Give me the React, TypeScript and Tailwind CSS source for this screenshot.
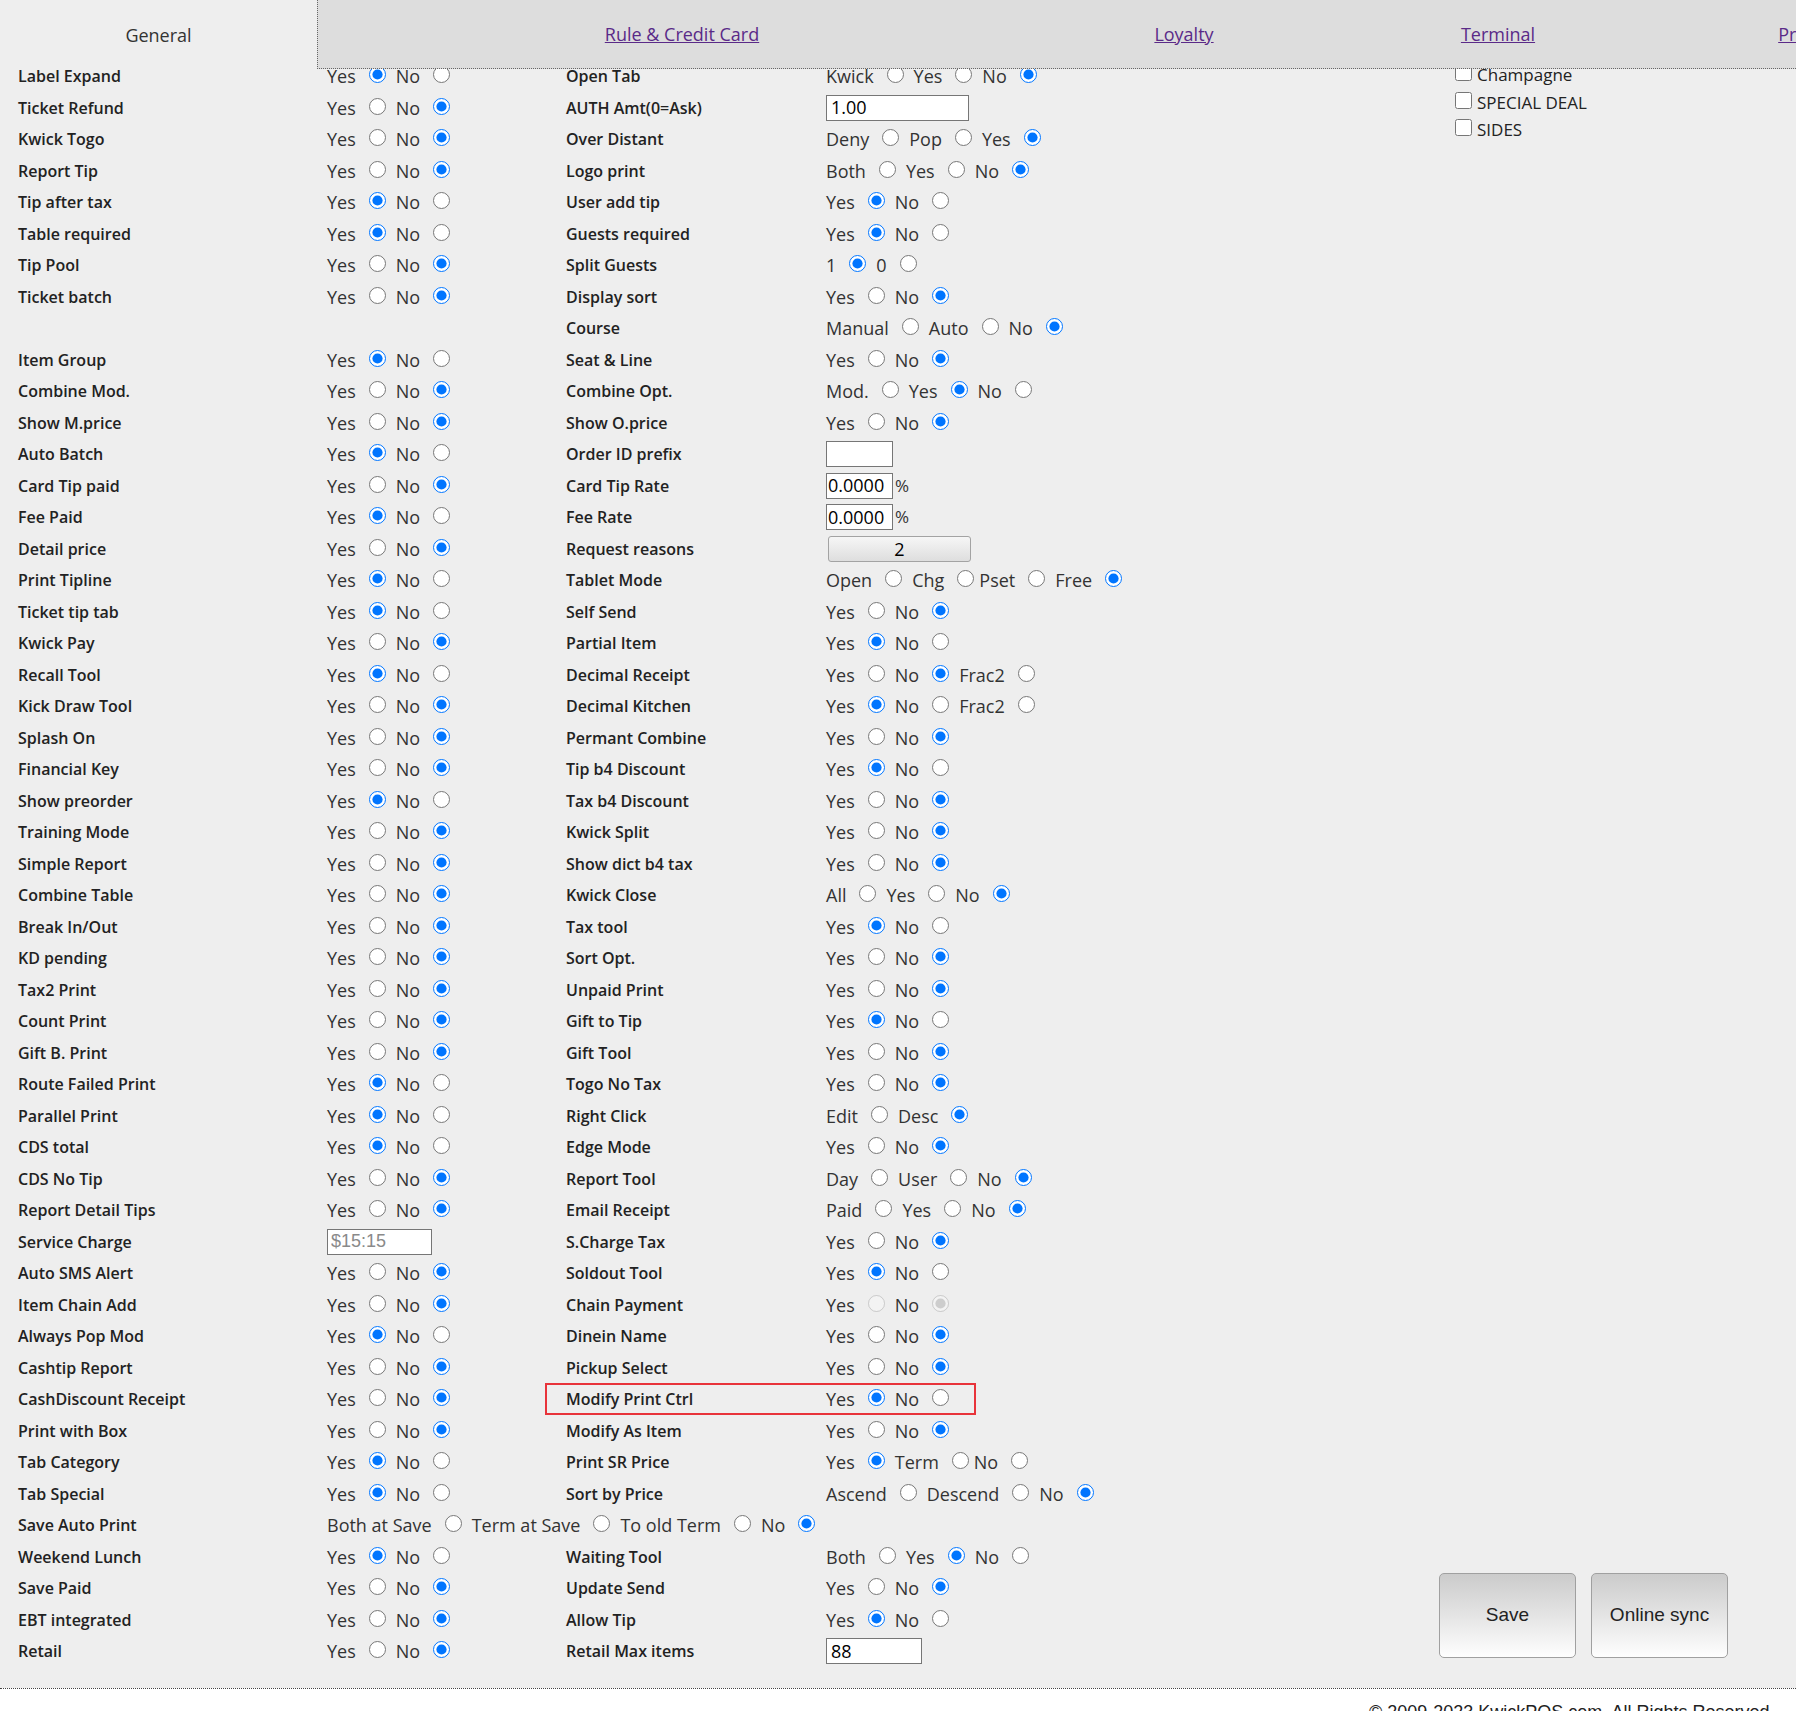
import React from 'react'

// text, checked, no gap after the radio
type Opt = [string, boolean, boolean?]

type Cell = {
  label: string
  opts?: Opt[]
  el?: React.ReactNode
  off?: boolean
}

const yn = (v: 'Y' | 'N'): Opt[] => [
  ['Yes', v === 'Y'],
  ['No', v === 'N'],
]

function Radio({ on, off, tight }: { on: boolean; off?: boolean; tight?: boolean }) {
  return (
    <input
      type="radio"
      defaultChecked={on}
      disabled={off}
      className={`w-[17px] h-[17px] ml-[13px] align-baseline ${tight ? 'mr-[5px]' : 'mr-[10px]'}`}
    />
  )
}

function Options({ opts, off }: { opts: Opt[]; off?: boolean }) {
  return (
    <div className="whitespace-nowrap text-[18px] leading-[24px] text-[#333]">
      {opts.map(([t, on, tight], i) => (
        <React.Fragment key={i}>
          <span>{t}</span>
          <Radio on={on} off={off} tight={tight} />
        </React.Fragment>
      ))}
    </div>
  )
}

function TextBox({ value, className }: { value: string; className: string }) {
  return (
    <input
      type="text"
      readOnly
      defaultValue={value}
      className={`h-[26px] border border-[#767676] bg-white text-[18px] text-black font-['Open_Sans',sans-serif] ${className}`}
    />
  )
}

function RateBox() {
  return (
    <div className="flex items-center">
      <TextBox value="0.0000" className="w-[67px] px-[1px]" />
      <span className="ml-[2px] text-[17px] text-[#333]">%</span>
    </div>
  )
}

const left: Array<[string, 'Y' | 'N' | '' | 'input' | 'wide']> = [
  ['Label Expand', 'Y'],
  ['Ticket Refund', 'N'],
  ['Kwick Togo', 'N'],
  ['Report Tip', 'N'],
  ['Tip after tax', 'Y'],
  ['Table required', 'Y'],
  ['Tip Pool', 'N'],
  ['Ticket batch', 'N'],
  ['', ''],
  ['Item Group', 'Y'],
  ['Combine Mod.', 'N'],
  ['Show M.price', 'N'],
  ['Auto Batch', 'Y'],
  ['Card Tip paid', 'N'],
  ['Fee Paid', 'Y'],
  ['Detail price', 'N'],
  ['Print Tipline', 'Y'],
  ['Ticket tip tab', 'Y'],
  ['Kwick Pay', 'N'],
  ['Recall Tool', 'Y'],
  ['Kick Draw Tool', 'N'],
  ['Splash On', 'N'],
  ['Financial Key', 'N'],
  ['Show preorder', 'Y'],
  ['Training Mode', 'N'],
  ['Simple Report', 'N'],
  ['Combine Table', 'N'],
  ['Break In/Out', 'N'],
  ['KD pending', 'N'],
  ['Tax2 Print', 'N'],
  ['Count Print', 'N'],
  ['Gift B. Print', 'N'],
  ['Route Failed Print', 'Y'],
  ['Parallel Print', 'Y'],
  ['CDS total', 'Y'],
  ['CDS No Tip', 'N'],
  ['Report Detail Tips', 'N'],
  ['Service Charge', 'input'],
  ['Auto SMS Alert', 'N'],
  ['Item Chain Add', 'N'],
  ['Always Pop Mod', 'Y'],
  ['Cashtip Report', 'N'],
  ['CashDiscount Receipt', 'N'],
  ['Print with Box', 'N'],
  ['Tab Category', 'Y'],
  ['Tab Special', 'Y'],
  ['Save Auto Print', 'wide'],
  ['Weekend Lunch', 'Y'],
  ['Save Paid', 'N'],
  ['EBT integrated', 'N'],
  ['Retail', 'N'],
]

const middle: Array<Cell | null> = [
  { label: 'Open Tab', opts: [['Kwick', false], ['Yes', false], ['No', true]] },
  { label: 'AUTH Amt(0=Ask)', el: <TextBox value="1.00" className="w-[143px] px-[4px]" /> },
  { label: 'Over Distant', opts: [['Deny', false], ['Pop', false], ['Yes', true]] },
  { label: 'Logo print', opts: [['Both', false], ['Yes', false], ['No', true]] },
  { label: 'User add tip', opts: yn('Y') },
  { label: 'Guests required', opts: yn('Y') },
  { label: 'Split Guests', opts: [['1', true], ['0', false]] },
  { label: 'Display sort', opts: yn('N') },
  { label: 'Course', opts: [['Manual', false], ['Auto', false], ['No', true]] },
  { label: 'Seat & Line', opts: yn('N') },
  { label: 'Combine Opt.', opts: [['Mod.', false], ['Yes', true], ['No', false]] },
  { label: 'Show O.price', opts: yn('N') },
  { label: 'Order ID prefix', el: <TextBox value="" className="w-[67px] px-[1px]" /> },
  { label: 'Card Tip Rate', el: <RateBox /> },
  { label: 'Fee Rate', el: <RateBox /> },
  {
    label: 'Request reasons',
    el: (
      <button className="w-[143px] h-[26px] ml-[2px] rounded-[3px] border border-[#a3a3a3] bg-linear-to-b from-[#f6f6f6] to-[#dedede] text-[18px] leading-[24px] text-black">
        2
      </button>
    ),
  },
  { label: 'Tablet Mode', opts: [['Open', false], ['Chg', false, true], ['Pset', false], ['Free', true]] },
  { label: 'Self Send', opts: yn('N') },
  { label: 'Partial Item', opts: yn('Y') },
  { label: 'Decimal Receipt', opts: [['Yes', false], ['No', true], ['Frac2', false]] },
  { label: 'Decimal Kitchen', opts: [['Yes', true], ['No', false], ['Frac2', false]] },
  { label: 'Permant Combine', opts: yn('N') },
  { label: 'Tip b4 Discount', opts: yn('Y') },
  { label: 'Tax b4 Discount', opts: yn('N') },
  { label: 'Kwick Split', opts: yn('N') },
  { label: 'Show dict b4 tax', opts: yn('N') },
  { label: 'Kwick Close', opts: [['All', false], ['Yes', false], ['No', true]] },
  { label: 'Tax tool', opts: yn('Y') },
  { label: 'Sort Opt.', opts: yn('N') },
  { label: 'Unpaid Print', opts: yn('N') },
  { label: 'Gift to Tip', opts: yn('Y') },
  { label: 'Gift Tool', opts: yn('N') },
  { label: 'Togo No Tax', opts: yn('N') },
  { label: 'Right Click', opts: [['Edit', false], ['Desc', true]] },
  { label: 'Edge Mode', opts: yn('N') },
  { label: 'Report Tool', opts: [['Day', false], ['User', false], ['No', true]] },
  { label: 'Email Receipt', opts: [['Paid', false], ['Yes', false], ['No', true]] },
  { label: 'S.Charge Tax', opts: yn('N') },
  { label: 'Soldout Tool', opts: yn('Y') },
  { label: 'Chain Payment', opts: yn('N'), off: true },
  { label: 'Dinein Name', opts: yn('N') },
  { label: 'Pickup Select', opts: yn('N') },
  { label: 'Modify Print Ctrl', opts: yn('Y') },
  { label: 'Modify As Item', opts: yn('N') },
  { label: 'Print SR Price', opts: [['Yes', true], ['Term', false, true], ['No', false]] },
  { label: 'Sort by Price', opts: [['Ascend', false], ['Descend', false], ['No', true]] },
  null,
  { label: 'Waiting Tool', opts: [['Both', false], ['Yes', true], ['No', false]] },
  { label: 'Update Send', opts: yn('N') },
  { label: 'Allow Tip', opts: yn('Y') },
  { label: 'Retail Max items', el: <TextBox value="88" className="w-[96px] px-[4px]" /> },
]

const saveAutoPrint: Opt[] = [
  ['Both at Save', false],
  ['Term at Save', false],
  ['To old Term', false],
  ['No', true],
]

const categories = ['Champagne', 'SPECIAL DEAL', 'SIDES']

const labelCls = 'text-[16px] leading-[24px] font-semibold text-[#222] whitespace-nowrap'

function SettingRow({ i }: { i: number }) {
  const [name, kind] = left[i]
  const mid = middle[i]
  return (
    <div className="relative flex items-center h-[31.5px]">
      <div className={`w-[327px] shrink-0 pl-[18px] ${labelCls}`}>{name}</div>
      {kind === 'wide' ? (
        <Options opts={saveAutoPrint} />
      ) : (
        <>
          <div className="w-[239px] shrink-0 flex items-center">
            {kind === 'Y' || kind === 'N' ? <Options opts={yn(kind)} /> : null}
            {kind === 'input' ? (
              <input
                type="text"
                readOnly
                placeholder="$15:15"
                className="w-[105px] h-[26px] px-[3px] border border-[#767676] bg-white text-[18px] font-['Liberation_Sans',Arial,sans-serif] placeholder:text-[#8a8a8a]"
              />
            ) : null}
          </div>
          <div className={`w-[260px] shrink-0 ${labelCls}`}>{mid?.label}</div>
          <div className="flex-1 flex items-center">
            {mid?.opts ? <Options opts={mid.opts} off={mid.off} /> : mid?.el}
          </div>
        </>
      )}
      {i === 42 ? (
        <div className="absolute left-[545px] top-0 w-[431px] h-full border-2 border-[#e8333a] pointer-events-none" />
      ) : null}
    </div>
  )
}

const tabs = [
  { name: 'Rule & Credit Card', w: 'w-[728px]' },
  { name: 'Loyalty', w: 'w-[276px]' },
  { name: 'Terminal', w: 'w-[352px]' },
  { name: 'Printer', w: 'w-[266px]' },
]

export default function App() {
  return (
    <div className="relative w-full font-['Open_Sans',sans-serif]">
      {/* tab strip, sits over the top of the scrolled settings */}
      <div className="absolute top-0 left-0 right-0 h-[69px] flex overflow-hidden z-10">
        <div className="w-[317px] shrink-0 flex items-center justify-center text-[18px] text-[#333] pt-[2px]">
          General
        </div>
        <div className="flex-1 flex bg-[#dddddd] border-l border-b border-dotted border-[#666]">
          {tabs.map((t) => (
            <div key={t.name} className={`${t.w} shrink-0 flex items-center justify-center pt-[1px]`}>
              <a href="#" className="text-[18px] text-[#5a2a88] underline whitespace-nowrap">
                {t.name}
              </a>
            </div>
          ))}
        </div>
      </div>

      <div className="flex bg-[#eeeeee] pt-[60.25px] pb-[21px]">
        <div className="w-[1430px] shrink-0">
          {left.map((_, i) => (
            <SettingRow key={i} i={i} />
          ))}
        </div>

        <div className="flex-1 flex flex-col justify-between">
          <div className="mt-[1px] pl-[25px]">
            {categories.map((c) => (
              <label key={c} className="flex items-center h-[27.4px] text-[17px] text-[#222] whitespace-nowrap">
                <input type="checkbox" className="w-[17px] h-[17px] mr-[5px] -mt-[4px]" />
                {c}
              </label>
            ))}
          </div>
          <div className="flex gap-[15px] pl-[9px] mb-[9px]">
            {['Save', 'Online sync'].map((b) => (
              <button
                key={b}
                className="w-[137px] h-[85px] rounded-[5px] border border-[#a0a0a0] bg-linear-to-b from-[#cbcbcb] to-[#fefefe] text-[19px] text-[#222] font-['Liberation_Sans',Arial,sans-serif]"
              >
                {b}
              </button>
            ))}
          </div>
        </div>
      </div>

      <div className="h-[23px] overflow-hidden bg-white border-t border-dotted border-[#444] pl-[1369px] pt-[12px]">
        <p className="text-[18px] leading-[22px] text-[#222] whitespace-nowrap font-['Liberation_Sans',Arial,sans-serif]">
          © 2009-2023 KwickPOS.com, All Rights Reserved.
        </p>
      </div>
    </div>
  )
}
